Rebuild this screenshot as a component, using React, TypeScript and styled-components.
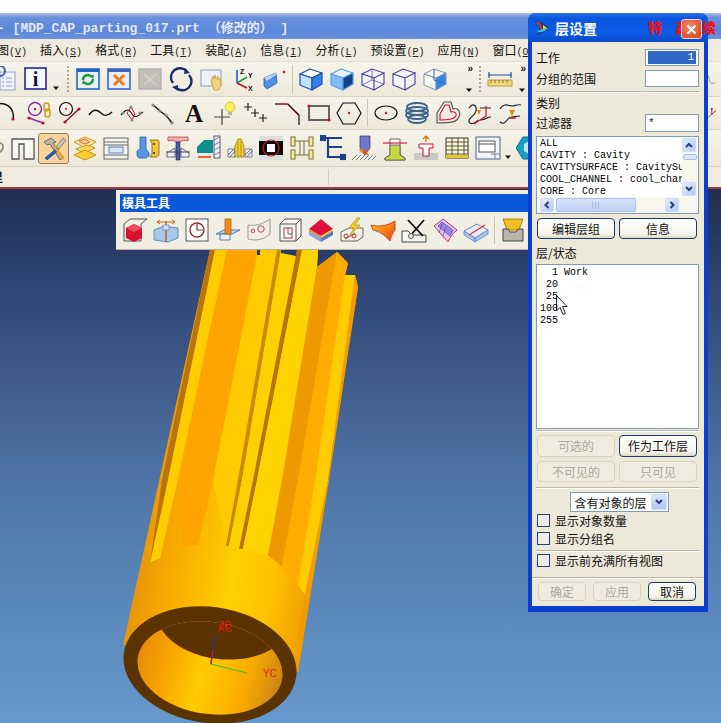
import React from "react";
import styled, { createGlobalStyle } from "styled-components";

const cjk = `"Noto Sans CJK SC", "Liberation Sans", sans-serif`;
const mono = `"Liberation Mono", "Noto Sans CJK SC", monospace`;

const Global = createGlobalStyle`
  html, body { margin: 0; padding: 0; background: #fff; }
  #root { width: 721px; height: 723px; }
`;

const Screen = styled.div`
  position: relative; width: 721px; height: 723px; overflow: hidden; display: flex; flex-direction: column;
  background: #fff; font-family: ${cjk}; font-size: 12px; color: #111;
`;
const TopGap = styled.div`height: 13px; flex: none;`;
const TitleBar = styled.div`
  height: 26px; flex: none; display: flex; align-items: center; white-space: pre; overflow: hidden;
  background: linear-gradient(#a9bde6 0, #6a90dc 18%, #5c86da 70%, #6c92dc 100%);
  color: #e3e9f8; font: bold 13px ${mono}; box-sizing: border-box;
  span { margin-left: -3px; }
`;
const MenuBar = styled.div`
  height: 23px; flex: none; display: flex; align-items: center; gap: 13px; overflow: hidden; padding-left: 40px;
  background: #efebde; border-bottom: 1px solid #e4e0d0; box-sizing: border-box;
`;
const MenuItem = styled.span`
  flex: none; font-size: 12px; line-height: 16px; white-space: nowrap;
  &:first-child { margin-left: -55px; }
  small { font: 10px ${mono}; color: #222; }
  u { text-underline-offset: 1px; }
`;
const ToolRow = styled.div<{ $h: number; $start: number }>`
  height: ${p => p.$h}px; flex: none; display: flex; align-items: center; overflow: hidden; box-sizing: border-box;
  background: linear-gradient(#f6f4ea, #ece9da);
  border-bottom: 1px solid #d8d4c2;
  & > :first-child { margin-left: ${p => p.$start}px; }
`;
const Slot = styled.div<{ $selected?: boolean }>`
  flex: none; width: 31px; height: 31px; display: flex; align-items: center; justify-content: center; box-sizing: border-box;
  ${p => p.$selected ? `background: #fbd29c; border: 1px solid #8c7a60; border-radius: 3px;` : ""}
`;
const Divider = styled.div`
  flex: none; width: 6px; height: 28px; display: flex; justify-content: center;
  &::before { content: ""; width: 1px; background: #c9c5b2; }
`;
const Grip = styled.div<{ $w: number }>`
  flex: none; width: ${p => p.$w}px; height: 26px; display: flex; justify-content: flex-end; box-sizing: border-box; padding-right: 3px;
  &::before { content: ""; width: 2px; background: repeating-linear-gradient(#a8a596 0 2px, transparent 2px 4px); }
`;
const Chevrons = styled.div<{ $w: number }>`
  flex: none; width: ${p => p.$w}px; height: 30px; display: flex; flex-direction: column; justify-content: space-between; align-items: flex-end;
  font: bold 10px/10px "Liberation Sans", sans-serif; color: #111; padding-right: 1px; box-sizing: border-box;
`;
const Small = styled.div<{ $w: number }>`
  flex: none; width: ${p => p.$w}px; height: 26px; display: flex; align-items: flex-end; justify-content: center;
`;
const Tail = styled.div`
  flex: none; margin-left: auto; width: 16px; height: 30px; display: flex; align-items: center;
`;
const StatusBar = styled.div`
  height: 20px; flex: none; display: flex; overflow: hidden; background: #efecdf; font-size: 12px; font-weight: bold;
  box-sizing: border-box; padding-top: 2px;
`;
const StatusCell = styled.div<{ $w: number }>`
  flex: none; width: ${p => p.$w}px; border-right: 1px solid #cfcbb9; height: 16px; line-height: 16px; text-indent: -9px; overflow: hidden;
`;
const RedLine = styled.div`height: 2px; flex: none; background: #a53a38;`;
const Viewport = styled.div`
  position: relative; flex: 1; background: linear-gradient(#1f2e54 0, #2f4472 17%, #4f75a6 55%, #6699cd 100%);
`;
const PartCanvas = styled.svg`position: absolute; left: 0; top: 0;`;
const MoldPanel = styled.div`
  position: absolute; left: 116px; top: 1px; width: 420px; height: 59px; background: #f1efe3;
  box-shadow: 0 1px 0 #b5b2a4; box-sizing: border-box; padding-top: 4px; overflow: hidden;
`;
const MoldTitle = styled.div`
  margin-left: 4px; height: 18px; background: #0a57dc; color: #fff; font-weight: bold; font-size: 12px; line-height: 18px; padding-left: 2px;
`;
const MoldIcons = styled.div`
  display: flex; align-items: center; height: 35px; padding-left: 3px;
`;

/* dialog */
const Dialog = styled.div`
  position: absolute; left: 528px; top: 13px; width: 180px; height: 599px; box-sizing: border-box;
  border: solid #0b3fd2; border-width: 0 4px 6px 4px; border-radius: 8px 8px 0 0; background: #ece9d8;
  display: flex; flex-direction: column;
`;
const DlgTitle = styled.div`
  position: relative; flex: none; height: 29px; margin: 0 -4px; border-radius: 8px 8px 0 0; display: flex; align-items: center; padding-left: 6px; gap: 5px;
  background: linear-gradient(#2b76ee 0, #0a55dc 18%, #0c5ce8 70%, #0a48c4 100%);
  color: #fff; font-weight: bold; font-size: 14px;
`;
const Watermark = styled.div`
  position: absolute; left: 120px; top: 3px; color: #ee1010; font: 900 14px/22px "Noto Sans CJK SC", sans-serif; white-space: pre; letter-spacing: 13px;
`;
const CloseBtn = styled.div`
  position: absolute; left: 153px; top: 6px; width: 21px; height: 20px; border-radius: 3px; box-sizing: border-box; border: 1px solid #f3d5c8;
  background: radial-gradient(circle at 40% 35%, #f08a6c, #d63c14); display: flex; align-items: center; justify-content: center;
`;
const Section = styled.div<{ $top?: number; $h?: number }>`
  margin: ${p => p.$top ?? 0}px 5px 0 4px; flex: none; ${p => p.$h ? `height: ${p.$h}px;` : ""}
`;
const Field = styled(Section)`
  display: flex; align-items: center; justify-content: space-between; line-height: 14px;
`;
const TextBox = styled.div<{ $active?: boolean }>`
  width: 54px; height: 100%; box-sizing: border-box; border: 1px solid #7f9db9; background: #fff; padding: 1px 2px; display: flex;
  font: 11px/15px ${mono};
  ${p => p.$active ? `span { flex: 1; background: #316ac5; color: #fff; text-align: right; padding-right: 2px; line-height: 12px; }` : ""}
`;
const Rule = styled.div<{ $top: number; $full?: boolean }>`
  flex: none; height: 1px; background: #b8b5a6; box-shadow: 0 1px 0 #fff; margin: ${p => p.$top}px ${p => p.$full ? "0" : "5px"} 0 ${p => p.$full ? "0" : "4px"};
`;
const Label = styled(Section)`line-height: 14px; font-size: 12px;`;
const ListFrame = styled(Section)`
  border: 1px solid #7f9db9; background: #fff; box-sizing: border-box; position: relative; overflow: hidden;
`;
const CatGrid = styled.div`
  display: grid; grid-template-columns: 1fr 16px; grid-template-rows: 60px 16px; height: 100%;
`;
const CatText = styled.pre`
  margin: 0; padding: 1px 0 0 3px; font: 10px/12px ${mono}; color: #000; overflow: hidden;
`;
const VBar = styled.div`
  display: flex; flex-direction: column; justify-content: space-between; padding: 1px 0; background: #f7f6ef; position: relative;
`;
const HBar = styled.div`
  grid-column: 1 / 3; display: flex; align-items: center; background: #f7f6ef; padding: 0 1px 0 3px; gap: 2px;
`;
const BarBtn = styled.div`
  flex: none; width: 14px; height: 14px; border-radius: 2px; background: linear-gradient(135deg, #e4edff, #b4c8f5); border: 1px solid #d0dcf5; box-sizing: border-box;
  display: flex; align-items: center; justify-content: center;
`;
const VThumb = styled.div`
  position: absolute; left: 1px; top: 17px; width: 14px; height: 6px; border: 1px solid #a8bfe8; box-sizing: border-box; border-radius: 2px; background: #dbe6fc;
`;
const HThumb = styled.div`
  flex: none; width: 80px; height: 14px; box-sizing: border-box; border: 1px solid #aac0ee; border-radius: 2px; background: linear-gradient(#d6e2fb, #c2d3f8); margin-right: 27px;
  display: flex; align-items: center; justify-content: center; color: #8ca4d8; font: 8px/1 "Liberation Sans", sans-serif; letter-spacing: 1px;
`;
const LayerText = styled.pre`
  margin: 0; padding: 2px 0 0 3px; font: 10px/12px ${mono}; color: #000;
`;
const Cursor = styled.svg`position: absolute; left: 19px; top: 30px;`;
const BtnRow = styled(Section)`
  display: flex; gap: 4px; padding: 0 2px 0 1px;
`;
const Btn = styled.div<{ $off?: boolean; $w?: number }>`
  flex: none; width: ${p => p.$w ?? 78}px; box-sizing: border-box; height: 100%; border-radius: 4px; display: flex; align-items: center; justify-content: center;
  font-size: 12px; line-height: 14px;
  ${p => p.$off
    ? `border: 1px solid #d5d2c2; color: #aca899; background: #efecdf;`
    : `border: 1px solid #1b3a68; color: #111; background: linear-gradient(#fff, #f4f3ea 80%, #dcd8c8);`}
`;
const SelectBox = styled(Section)`
  align-self: center; width: 99px; margin: 4px 0 0 2px; box-sizing: border-box; border: 1px solid #7f9db9; background: #fff;
  display: flex; align-items: center; justify-content: space-between; padding: 0 1px 0 4px;
`;
const SelectBtn = styled(BarBtn)`width: 16px; height: 16px; background: linear-gradient(#dbe6fd, #aec5f5);`;
const Check = styled(Section)`
  display: flex; align-items: center; gap: 5px; margin-left: 5px; line-height: 13px;
  i { flex: none; width: 13px; height: 13px; box-sizing: border-box; border: 1px solid #22466e; background: #f0eee4; }
`;
const Footer = styled.div`
  flex: none; display: flex; height: 19px; gap: 7px; margin: 4px 0 0 6px;
`;

const I: React.FC<{ children: React.ReactNode; s?: number }> = ({ children, s = 26 }) => (
  <svg width={s} height={s} viewBox="0 0 26 26" fill="none">{children}</svg>
);
const dot = (x: number, y: number, c = "#c8102e", r = 1.6) => <circle cx={x} cy={y} r={r} fill={c} />;
const PURPLE = "#4a3f9a";
const txt = (x: number, y: number, t: string, size = 7) => (
  <text x={x} y={y} fontSize={size} fontWeight="bold" fontFamily="Liberation Sans" fill="#111">{t}</text>
);
const cube = (top: string, left: string, right: string, stroke = "#1d4fa8") => (
  <g stroke={stroke} strokeWidth="1.2" strokeLinejoin="round">
    <path d="M2 8 L12 3 L24 7 L14 12 Z" fill={top} />
    <path d="M2 8 L14 12 V24 L2 19 Z" fill={left} />
    <path d="M14 12 L24 7 V18 L14 24 Z" fill={right} />
  </g>
);

const icons: Record<string, React.ReactNode> = {
  doc: <g><rect x="8" y="6" width="15" height="18" fill="#eef2fa" stroke="#8fa2c2" /><path d="M14 12h6M14 16h6M14 20h6M10 12h2M10 16h2M10 20h2" stroke="#8fa2c2" /><circle cx="8" cy="5" r="5" fill="none" stroke="#3a5fa8" strokeWidth="2" /></g>,
  info: <g><rect x="2" y="2" width="21" height="21" fill="#f6f6ff" stroke="#24288c" strokeWidth="1.6" /><text x="12.5" y="20" textAnchor="middle" fontSize="20" fontWeight="bold" fontFamily="Liberation Serif" fill="#0c1038">i</text></g>,
  refresh: <g><rect x="2" y="3" width="22" height="20" fill="#e9f0fa" stroke="#1f66c4" strokeWidth="1.6" /><rect x="2" y="3" width="22" height="3" fill="#1f66c4" /><path d="M8 14a5 5 0 0 1 9-3M18 13a5 5 0 0 1-9 3" stroke="#1f9a3a" strokeWidth="2.4" /><path d="M15 9l4 0 -1 4zM11 18l-4 0 1-4z" fill="#1f9a3a" /></g>,
  xbox: <g><rect x="2" y="3" width="22" height="20" fill="#e9eefa" stroke="#3a62bf" strokeWidth="1.6" /><rect x="2" y="3" width="22" height="3" fill="#3a62bf" /><path d="M8 9l10 10M18 9L8 19" stroke="#ef7a1a" strokeWidth="3" /></g>,
  greyx: <g><rect x="2" y="3" width="22" height="20" fill="#c2bfb4" stroke="#b0b0b8" strokeWidth="1.4" /><path d="M7 8l12 11M19 8L7 19" stroke="#d0cdc2" strokeWidth="2" /></g>,
  rotate: <g stroke="#1c2c6a" strokeWidth="2.4"><path d="M5 17A9 9 0 0 1 19 5.5" /><path d="M21 9A9 9 0 0 1 8 21.5" /><path d="M17 2l5 5-6 1z" fill="#1c2c6a" strokeWidth="0" /><path d="M10 25l-6-4 6-2z" fill="#1c2c6a" strokeWidth="0" /></g>,
  hand: <g><rect x="2" y="4" width="20" height="16" fill="#eef2fb" stroke="#a9b4c8" strokeWidth="1.4" /><path d="M12 15l2-5 1 3 1-4 1 4 2-3 0 4 2-2 1 6-2 6h-5z" fill="#f7d27c" stroke="#c89a3a" strokeWidth=".8" /></g>,
  xyz: <g><path d="M7 17V4" stroke="#1a55c8" strokeWidth="1.6" /><path d="M7 17l10-6" stroke="#1f9a3a" strokeWidth="1.6" /><path d="M7 17l10 5" stroke="#c8102e" strokeWidth="1.6" />{txt(10, 8, "Z")}{txt(18, 12, "Y")}{txt(18, 25, "X")}</g>,
  box3d: <g><path d="M3 12l12-5 1 10-10 6-3-3z" fill="#4f8fe0" stroke="#2a60b8" strokeWidth=".8" /><path d="M3 12l3 3 10-7-1-1z" fill="#bcd6f5" />{dot(23, 6, "#c8102e", 1.3)}</g>,
  cubeA: cube("#ffffff", "#bfe0ff", "#2f80ec"),
  cubeB: cube("#eaf4ff", "#7fbdf6", "#10408c", "#5a9be6"),
  cubeC: <g stroke={PURPLE} strokeWidth="1.1"><path d="M2 8L12 3l12 4-10 5zM2 8l12 4v12L2 19zM14 12l10-5v11l-10 6z" fill="#f3f3fb" /><path d="M12 3v11l-10 5M12 14l12 4" strokeWidth=".7" /></g>,
  cubeD: <g stroke={PURPLE} strokeWidth="1.1"><path d="M2 8L12 3l12 4-10 5zM2 8l12 4v12L2 19zM14 12l10-5v11l-10 6z" fill="#f3f3fb" /></g>,
  cubeE: <g stroke="#8a93a8" strokeWidth="1"><path d="M2 8L12 3l12 4-10 5zM2 8l12 4v12L2 19z" fill="#f4f5f9" /><path d="M14 12l10-5v11l-10 6z" fill="#2f86ea" /><path d="M12 3v11l12 4" stroke="#3a6ab8" /></g>,
  ruler: <g><path d="M1 9h24M2 6v6M24 6v6" stroke="#2a50b0" strokeWidth="1.2" /><rect x="1" y="14" width="24" height="6" fill="#f1d87a" stroke="#b89a3a" /><path d="M4 14v3M8 14v3M12 14v3M16 14v3M20 14v3" stroke="#8a7020" /></g>,
  arc: <g><path d="M-6 13A10 10 0 0 1 18 19" stroke="#111" strokeWidth="1.5" />{dot(3, 19)}{dot(18, 19)}</g>,
  circleChain: <g><circle cx="9" cy="9" r="6.5" stroke="#8e2f9a" strokeWidth="1.4" />{dot(9, 9, "#8e2f9a", 1.2)}<path d="M3 18l14 5" stroke="#8e2f9a" strokeWidth="1.4" />{dot(3, 18)}{dot(17, 23)}<rect x="18" y="3" width="5" height="8" rx="2.5" stroke="#c9a520" strokeWidth="1.6" /><rect x="19" y="9" width="5" height="8" rx="2.5" stroke="#c9a520" strokeWidth="1.6" /></g>,
  circleLine: <g><circle cx="9" cy="9" r="6.5" stroke="#111" strokeWidth="1.2" />{dot(9, 9, "#c8102e", 1)}<path d="M8 22L22 9" stroke="#8a1020" strokeWidth="1.4" />{dot(8, 22)}{dot(22, 9)}</g>,
  tilde: <path d="M1 15C6 8 10 10 13 13S19 17 24 12" stroke="#111" strokeWidth="1.5" />,
  polyCurve: <g><path d="M2 15C8 8 10 9 13 14S19 16 24 12" stroke="#111" strokeWidth="1.2" /><path d="M8 13L12 7 16 14 13 20z" stroke="#c8102e" />{dot(4, 13, "#888")}{dot(12, 7, "#888")}{dot(21, 13, "#888")}{dot(13, 20, "#888")}</g>,
  curvePtsDots: <g><path d="M3 5C8 9 11 12 14 14S19 19 22 23" stroke="#111" strokeWidth="1.4" />{dot(3, 5, "#888")}{dot(10, 11, "#888")}{dot(16, 15, "#888")}{dot(22, 23, "#888")}</g>,
  letterA: <text x="13" y="22" textAnchor="middle" fontSize="25" fontWeight="bold" fontFamily="Liberation Serif" fill="#111">A</text>,
  plusBulb: <g><path d="M2 17h16M10 9v16" stroke="#444" strokeWidth="1.2" /><circle cx="18" cy="7" r="5" fill="#f8ef60" stroke="#d8c840" /><rect x="16" y="12" width="4" height="3" fill="#b8b8a0" /></g>,
  pluses: <path d="M5 3v8M1 7h8M12 9v8M8 13h8M20 14v8M16 18h8" stroke="#222" strokeWidth="1.2" />,
  corner: <g><path d="M1 4H14L25 15V25" stroke="#111" strokeWidth="1.2" /><path d="M1 4H13L25 16" stroke="#c8102e" /></g>,
  rectS: <g><rect x="4" y="6" width="20" height="14" stroke="#555" strokeWidth="1.8" />{dot(4, 6)}{dot(24, 20)}</g>,
  hexa: <g><path d="M7 3H19L25 13 19 24H7L1 13z" stroke="#111" strokeWidth="1.2" />{dot(13, 13, "#c8102e", 1.2)}</g>,
  ellipseS: <g><ellipse cx="13" cy="13" rx="11" ry="7" stroke="#111" strokeWidth="1.2" />{dot(13, 13, "#c8102e", 1.2)}</g>,
  spring: <g stroke="#3c648c" strokeWidth="1.8"><ellipse cx="13" cy="7" rx="10" ry="4" /><ellipse cx="13" cy="11" rx="11" ry="4" /><ellipse cx="13" cy="15" rx="11" ry="4" /><ellipse cx="13" cy="19" rx="9" ry="4" /></g>,
  heartS: <g><path d="M2 13L9 2h7l2 7c5-2 8 3 6 8s-8 6-22 6z" stroke="#555" strokeWidth="1.2" /><path d="M5 14l5-9h4l2 7c4-1 6 2 5 4s-6 4-16 4z" stroke="#c8102e" strokeWidth="1.1" /></g>,
  curveA: <g><path d="M3 8c4-6 8-2 7 3s-7 6-7 10 6 3 9-1" stroke="#222" strokeWidth="1.2" /><path d="M14 8h11M14 20c5 0 7-3 11-3" stroke="#222" strokeWidth="1.2" /><path d="M8 24L20 16V6" stroke="#c8102e" strokeWidth="1.2" /><path d="M11 10l2 5 2-5z" fill="#f0801a" /></g>,
  curveB: <g><path d="M3 9c4-7 9-3 12-3s5-2 9-1M3 22c3 3 6 0 8-3s7-2 12-3" stroke="#222" strokeWidth="1.2" /><path d="M12 10l3 6 3-6z" fill="#f0801a" /><path d="M13 18h6" stroke="#c8102e" strokeWidth="1.4" /></g>,
  leading: <path d="M16 9c4-3 8-1 8 3s-4 6-8 7" stroke="#8a8478" strokeWidth="1.6" />,
  notch: <path d="M2 4H24V24H14V9H9V24H2z" fill="#f6f6f2" stroke="#555" strokeWidth="1.3" />,
  hammer: <g><path d="M3 7l7-4 5 4-3 1 10 15-3 2L9 9l-3 1z" fill="#b9b4a6" stroke="#555" strokeWidth=".8" /><path d="M22 3l3 2-7 9-3-2z" fill="#c9c5b6" stroke="#555" strokeWidth=".6" /><path d="M16 13L4 23l2 2 12-10z" fill="#1c5fc0" stroke="#163c80" strokeWidth=".6" /><path d="M13 11l10 13" stroke="#e8a52a" strokeWidth="2.6" /></g>,
  layers: <g stroke="#c8961c" strokeWidth="1"><path d="M2 7l11-5 11 5-11 6z" fill="#ffe9a0" /><path d="M7 6l6-2 5 3-6 2z" fill="#f8c9a0" stroke="#d07030" /><path d="M4 14l11-4 8 3-11 5z" fill="#ffd860" /><path d="M2 20l11-5 11 5-11 5z" fill="#ffcc30" /></g>,
  frame: <g stroke="#666"><rect x="1" y="3" width="24" height="21" fill="#f4f4f0" /><path d="M1 7h24M1 20h24M1 10h24" /><rect x="6" y="12" width="14" height="6" fill="#dbe6f5" stroke="#6080b8" /></g>,
  blueYellow: <g><path d="M6 2h6v12l3 4v3l-3 2H5l-2-2v-5l3-2z" fill="#5a96e0" stroke="#2a60b0" strokeWidth=".8" /><path d="M16 5h7c2 0 2 1 2 3v10c0 3-1 4-3 4h-6l2-3V8z" fill="#f3c63a" stroke="#8a6a10" strokeWidth=".9" />{dot(20, 9, "#333", 1)}{dot(20, 18, "#333", 1)}</g>,
  tsec: <g><path d="M3 2H23V6C20 5 17 5 15 7H11C9 5 6 5 3 6z" fill="#f4b0b0" stroke="#c04040" strokeWidth=".8" /><path d="M2 18L10 13V22H2zM24 18L16 13V22H24z" fill="#eef" stroke="#446" strokeWidth=".8" /><rect x="11" y="7" width="4" height="18" fill="#4a5aa8" stroke="#223" strokeWidth=".6" /><path d="M1 17H25" stroke="#444" /></g>,
  tealWall: <g><path d="M1 12l7-7h9v13H1z" fill="#0e8d8a" /><rect x="18" y="1" width="6" height="22" fill="#f0f0f4" stroke="#336" strokeWidth=".8" /><path d="M18 5l6-3M18 10l6-3M18 15l6-3M18 20l6-3" stroke="#557" strokeWidth=".7" /><path d="M2 22h13" stroke="#e04010" strokeWidth="1.6" /></g>,
  hatchY: <g><path d="M1 14h7v8H1zM18 14h7v8h-7z" fill="#eef" stroke="#556" strokeWidth=".7" /><path d="M1 20l6-6M3 22l5-6M18 20l6-6M20 22l5-6" stroke="#556" strokeWidth=".8" /><path d="M8 22V11l3-7h3l3 7v11z" fill="#f2d030" stroke="#8a7010" strokeWidth=".7" /><path d="M11 22V6M14 22V6" stroke="#8a7010" strokeWidth=".6" /></g>,
  blackRed: <g><rect x="1" y="1" width="24" height="24" fill="#0b0b0b" /><rect x="1" y="1" width="24" height="5" fill="#ddd" /><rect x="1" y="20" width="24" height="5" fill="#ddd" /><rect x="9" y="9" width="8" height="8" fill="#fff" /><circle cx="13" cy="13" r="8" stroke="#d01818" strokeWidth="1.2" /></g>,
  yellowH: <g stroke="#7a7040" strokeWidth="1"><rect x="2" y="2" width="4" height="9" fill="#f4ee90" /><rect x="20" y="2" width="4" height="9" fill="#f4ee90" /><rect x="2" y="15" width="4" height="9" fill="#f4ee90" /><rect x="20" y="15" width="4" height="9" fill="#f4ee90" /><path d="M6 6h14M6 20h14M11 6v14M15 6v14" /></g>,
  blueS: <g stroke="#1f3f8c" strokeWidth="2.2"><path d="M3 3H22M8 3V12H22M8 12V22H24" /><rect x="1" y="1" width="4" height="4" fill="#1f3f8c" /><rect x="21" y="20" width="4" height="4" fill="#1f3f8c" /></g>,
  drill: <g><path d="M9 1h10v12l-5 7-5-7z" fill="#6e78c8" stroke="#334" strokeWidth=".7" /><path d="M9 14l3 3" stroke="#f08020" strokeWidth="3" /><path d="M12 15l5 5M18 14l-5 5" stroke="#f05a10" strokeWidth="1.6" /><path d="M1 25l5-5M5 25l5-5M9 25l5-5M13 25l5-5M17 25l5-5M21 25l4-4" stroke="#7a8090" strokeWidth="1" /></g>,
  greenT: <g><path d="M8 4h10v16l5 3v2H3v-2l5-3z" fill="#fff" stroke="#444" strokeWidth=".8" /><path d="M8 10h10v10l5 3v2H3v-2l5-3z" fill="#c8d840" stroke="#556" strokeWidth=".8" /><path d="M1 8h24" stroke="#c8102e" strokeWidth="1.1" /></g>,
  redT: <g><path d="M1 18h8l2-5h4l2 5h8v7H1z" fill="#c9c9c9" /><path d="M6 9h14v4h-4v8h-6v-8H6z" fill="#fff" stroke="#c8102e" strokeWidth="1" /><path d="M13 1v6M10 4l3-3 3 3" stroke="#e06010" strokeWidth="1.2" /></g>,
  gridT: <g><rect x="2" y="3" width="22" height="20" fill="#fbf6d0" stroke="#333" /><path d="M2 7h22M2 11h22M2 15h22M2 19h22M8 3v20M14 3v20M20 3v20" stroke="#333" strokeWidth=".8" /><rect x="2" y="20" width="22" height="3" fill="#e8c820" /></g>,
  win: <g><rect x="1" y="2" width="24" height="22" fill="#f0f3fa" stroke="#6c7a96" strokeWidth="1.2" /><rect x="4" y="6" width="16" height="11" fill="#fff" stroke="#555" /><path d="M4 9h16" stroke="#555" /><path d="M16 19h9M20 19v5" stroke="#6c7a96" /></g>,
  teal: <g><path d="M7 2h12l7 11-7 11H7L0 13z" fill="#1a9ec0" stroke="#0b7088" /><path d="M8 9l5-3 5 3v7l-5 3-5-3z" fill="#bfe6ee" /></g>,
  moldRed: <g><path d="M2 7l6-5h17l-6 5v17H2z" stroke="#444" strokeWidth=".9" /><path d="M4 11l8-4 8 4v10l-8 4-8-4z" fill="#d81030" /><path d="M4 11l8-4 8 4-8 4z" fill="#f04860" /></g>,
  moldSplit: <g><path d="M1 13l10-4 14 2v10l-10 4-14-2z" fill="#a8c8ea" stroke="#5078a8" strokeWidth=".8" /><path d="M13 4v21" stroke="#d04020" strokeWidth="1.2" /><path d="M4 5h18M4 5l3-2M4 5l3 2M22 5l-3-2M22 5l-3 2" stroke="#d86018" strokeWidth="1" /><path d="M10 8h6v5h-6z" fill="#cfe0f4" stroke="#5078a8" strokeWidth=".6" /></g>,
  moldCircle: <g><rect x="2" y="2" width="22" height="22" fill="#fff" stroke="#555" /><circle cx="13" cy="13" r="7" stroke="#8a3030" strokeWidth="1.4" /><path d="M13 7v6h6" stroke="#8a3030" strokeWidth="1.2" /></g>,
  moldCross: <g><path d="M1 17l8-4h16l-8 4z" fill="#bcd4f0" stroke="#3a60a0" strokeWidth=".8" /><path d="M5 17h10v6H5z" fill="#eef" stroke="#3a60a0" strokeWidth=".8" /><rect x="10" y="2" width="6" height="15" fill="#f08a18" stroke="#a05a08" strokeWidth=".7" /></g>,
  moldSheet: <g><path d="M2 8C8 9 16 8 24 2V17C17 23 10 24 2 22z" fill="#efefe8" stroke="#9a9a90" /><circle cx="7" cy="14" r="1.8" stroke="#d04848" /><circle cx="15" cy="12" r="3.2" stroke="#d04848" /></g>,
  moldBox: <g stroke="#555"><path d="M3 7l5-5h16v17l-5 5H3z" fill="#f6f6f4" /><path d="M3 7h16v17M19 7l5-5" /><rect x="7" y="11" width="8" height="10" fill="#fff" stroke="#b03030" /><path d="M11 11v6h4" stroke="#555" /></g>,
  moldColor: <g><path d="M1 12l12-10 12 10-12 7z" fill="#e0103c" /><path d="M1 12l12 7v2L1 14z" fill="#f08a20" /><path d="M25 12l-12 7v2l12-7z" fill="#f2c820" /><path d="M1 14l12 7v4L1 18z" fill="#8aa4e0" /><path d="M25 14l-12 7v4l12-7z" fill="#5a78c8" /></g>,
  moldBolt: <g><path d="M2 15l8-4h14v9l-6 4H2z" fill="#f4f2e4" stroke="#666" /><path d="M18 1L10 11h5l-4 7 10-10h-5l5-7z" fill="#f2d020" stroke="#a08010" strokeWidth=".6" /><circle cx="7" cy="19" r="2" stroke="#c03030" /><circle cx="15" cy="19" r="2" stroke="#c03030" /><path d="M6 22l10-6" stroke="#a03030" /></g>,
  moldOrange: <g><path d="M1 8C9 10 17 9 25 4V13C22 17 21 20 20 24 14 17 8 14 3 13z" fill="url(#mo)" stroke="#c03010" strokeWidth=".8" /><defs><linearGradient id="mo" x1="0" y1="0" x2="1" y2="1"><stop stopColor="#ffc820" /><stop offset="1" stopColor="#f04010" /></linearGradient></defs></g>,
  moldX: <g><path d="M1 14h6l4 4h14v7H1z" fill="#f4f4f0" stroke="#444" /><path d="M7 3l15 16M23 3L9 19" stroke="#111" strokeWidth="1.8" /><circle cx="10" cy="19" r="2.4" fill="#eee" stroke="#555" /></g>,
  moldPurple: <g><path d="M2 9C6 6 9 4 11 2L25 13C21 16 18 20 16 25z" fill="#e4c8f0" stroke="#c03070" strokeWidth="1" /><path d="M6 9l12 10 3-6-11-8z" fill="#9a88e0" stroke="#5040a8" strokeWidth=".7" /><path d="M10 7l-3 9M14 10l-3 9" stroke="#5040a8" strokeWidth=".7" /></g>,
  moldPlane: <g><path d="M1 14L14 7l11 6-13 8z" fill="#e6eefb" stroke="#6c8ac0" /><path d="M1 14v4l11 7v-4zM25 13v4l-13 8v-4z" fill="#a8c4ea" stroke="#6c8ac0" strokeWidth=".8" /><path d="M6 18L22 8" stroke="#e03030" strokeWidth="1.2" /></g>,
  moldYellow: <g><path d="M3 2H23L19 13H7z" fill="#f4c020" stroke="#907010" strokeWidth=".8" /><path d="M3 12h5l2 3h6l2-3h5v12H3z" fill="#b8b6a8" stroke="#444" /></g>,
  edgeCurve: <path d="M-2 6c6-4 8 3 9 8s3 8 9 5" stroke="#777" strokeWidth="1.3" />,
  edgeRed: <g><path d="M3 22l8-7" stroke="#778" strokeWidth="1.6" /><path d="M11 15v-9M11 15l7-6" stroke="#c8102e" strokeWidth="1.6" />{dot(3, 12, "#f0a010")}{dot(11, 6)}</g>,
};

const Ico: React.FC<{ n: string; selected?: boolean }> = ({ n, selected }) => (
  <Slot $selected={selected}><I>{icons[n]}</I></Slot>
);
const Dropdown = () => (
  <svg width="8" height="8" viewBox="0 0 8 8"><path d="M1 2.5h6L4 6z" fill="#111" /></svg>
);
const Chev: React.FC<{ d: string }> = ({ d }) => {
  const paths: Record<string, string> = { up: "M2 7l3-3 3 3", down: "M2 3l3 3 3-3", left: "M6.5 2L3.5 5l3 3", right: "M3.5 2l3 3-3 3" };
  return <svg width="10" height="10" viewBox="0 0 10 10" fill="none"><path d={paths[d]} stroke="#2a3f78" strokeWidth="2" /></svg>;
};

const row1a = ["refresh", "xbox", "greyx", "rotate", "hand", "xyz", "box3d"];
const row1b = ["cubeA", "cubeB", "cubeC", "cubeD", "cubeE"];
const row2a = ["arc", "circleChain", "circleLine", "tilde", "polyCurve", "curvePtsDots", "letterA", "plusBulb", "pluses", "corner", "rectS", "hexa"];
const row2b = ["ellipseS", "spring", "heartS", "curveA", "curveB"];
const row3 = ["notch", "hammer", "layers", "frame", "blueYellow", "tsec", "tealWall", "hatchY", "blackRed", "yellowH", "blueS", "drill", "greenT", "redT", "gridT", "win"];
const mold = ["moldRed", "moldSplit", "moldCircle", "moldCross", "moldSheet", "moldBox", "moldColor", "moldBolt", "moldOrange", "moldX", "moldPurple", "moldPlane"];
const menus: [string, string][] = [["视图", "V"], ["插入", "S"], ["格式", "R"], ["工具", "T"], ["装配", "A"], ["信息", "I"], ["分析", "L"], ["预设置", "P"], ["应用", "N"], ["窗口", "O"]];

const poly = (pts: string, fill: string) => <polygon points={pts} fill={fill} />;

const Part = () => (
  <PartCanvas width="721" height="534" viewBox="0 189 721 534" fill="none">
    <defs>
      <linearGradient id="bodyG" gradientUnits="userSpaceOnUse" x1="125" y1="640" x2="300" y2="668">
        <stop offset="0" stopColor="#e8950a" />
        <stop offset=".18" stopColor="#f8a800" />
        <stop offset=".55" stopColor="#ffd000" />
        <stop offset=".78" stopColor="#ffc000" />
        <stop offset="1" stopColor="#f09c00" />
      </linearGradient>
      <linearGradient id="wallG" gradientUnits="userSpaceOnUse" x1="138" y1="660" x2="283" y2="680">
        <stop offset="0" stopColor="#e88c08" />
        <stop offset=".2" stopColor="#f8a400" />
        <stop offset=".45" stopColor="#ffcc00" />
        <stop offset=".75" stopColor="#fcac00" />
        <stop offset="1" stopColor="#c88414" />
      </linearGradient>
      <clipPath id="innerC"><ellipse cx="210" cy="668" rx="73" ry="46" transform="rotate(8 210 668)" /></clipPath>
    </defs>
    <polygon fill="url(#bodyG)" points="210,250 277,250 318,250 317,267 337,252 348,263 345,275 355,275 358,287 298,672 123,645" />
    {poly("210,250 215,250 168,480 155,561 150,563 162,480", "#b87408")}
    {poly("215,250 227,250 178,480 160,558 150,563 168,480", "#ffcc00")}
    {poly("227,250 258,250 213,480 198,545 183,547 178,480", "#ffa400")}
    {poly("258,250 277,250 238,480 226,546 213,480", "#ffca00")}
    {poly("277,250 281,250 242,480 229,546 226,546 238,480", "#c98806")}
    {poly("281,250 297,250 253,480 239,549 229,546 242,480", "#ffd000")}
    {poly("297,250 302,250 257,480 243,549 239,549 253,480", "#b87408")}
    {poly("302,250 318,250 317,267 282,480 268,555 243,549 257,480", "#ffd400")}
    {poly("317,267 337,252 298,480 282,567 268,555 282,480", "#f09800")}
    {poly("337,252 348,263 345,275 315,480 298,585 282,567 298,480", "#ffae00")}
    {poly("345,275 355,275 328,480 305,595 298,585 315,480", "#ffcc00")}
    {poly("355,275 358,287 329,480 300,660 298,630 305,595 328,480", "#f39c00")}
    {poly("257,249 260,249 260,255 257,255", "#263a63")}
    {poly("281,249 297,249 296,256 281,253", "#263a63")}
    <ellipse cx="210" cy="665" rx="87" ry="58" fill="#5a3300" transform="rotate(8 210 665)" />
    <ellipse cx="210" cy="668" rx="73" ry="46" fill="url(#wallG)" transform="rotate(8 210 668)" />
    <path d="M158 624Q172 650 210 658Q250 664 275 647L310 600L130 590Z" fill="#5a3300" clipPath="url(#innerC)" />
    <path d="M211 664l4-28" stroke="#2a30b0" strokeWidth="1.1" />
    <path d="M211 664l2-14" stroke="#d01860" strokeWidth="1.1" />
    <path d="M211 664l36 9" stroke="#44c020" strokeWidth="1.1" />
    <path d="M211 664v-4" stroke="#e02020" strokeWidth="1.1" />
    <text x="218" y="629" fontFamily="Liberation Sans" fontSize="10" fill="#e01818">ZC</text>
    <text x="218" y="632" fontFamily="Liberation Sans" fontSize="10" fill="#e01818">XC</text>
    <text x="263" y="677" fontFamily="Liberation Sans" fontSize="10" fill="#e01818">YC</text>
  </PartCanvas>
);

export default function App() {
  return (
    <Screen>
      <Global />
      <TopGap />
      <TitleBar><span>{"- [MDP_CAP_parting_017.prt （修改的） ]"}</span></TitleBar>
      <MenuBar>
        {menus.map(([a, b]) => <MenuItem key={a}>{a}<small>(<u>{b}</u>)</small></MenuItem>)}
      </MenuBar>
      <ToolRow $h={35} $start={-11}>
        <Ico n="doc" /><Ico n="info" />
        <Small $w={9}><Dropdown /></Small>
        <Grip $w={12} />
        {row1a.map(n => <Ico key={n} n={n} />)}
        <Divider />
        {row1b.map(n => <Ico key={n} n={n} />)}
        <Chevrons $w={24}><span>»</span><Dropdown /></Chevrons>
        <Grip $w={10} />
        <Ico n="ruler" />
        <Chevrons $w={12}><span>»</span><Dropdown /></Chevrons>
        <Tail><I>{icons.edgeCurve}</I></Tail>
      </ToolRow>
      <ToolRow $h={33} $start={-8}>
        {row2a.map(n => <Ico key={n} n={n} />)}
        <Divider />
        {row2b.map(n => <Ico key={n} n={n} />)}
        <Tail><I>{icons.edgeRed}</I></Tail>
      </ToolRow>
      <ToolRow $h={37} $start={-24}>
        <Ico n="leading" />
        {row3.map(n => <Ico key={n} n={n} selected={n === "hammer"} />)}
        <Small $w={10}><Dropdown /></Small>
        <Slot><I>{icons.teal}</I></Slot>
      </ToolRow>
      <StatusBar>
        <StatusCell $w={328}>里</StatusCell>
      </StatusBar>
      <RedLine />
      <Viewport>
        <Part />
        <MoldPanel>
          <MoldTitle>模具工具</MoldTitle>
          <MoldIcons>
            {mold.map(n => <Ico key={n} n={n} />)}
            <Divider />
            <Ico n="moldYellow" />
          </MoldIcons>
        </MoldPanel>
      </Viewport>

      <Dialog>
        <DlgTitle>
          <svg width="16" height="16" viewBox="0 0 16 16"><path d="M1 1c5 0 10 3 14 7-4 4-9 7-13 7 4-3 5-9-1-14z" fill="#1c3f78" /><path d="M3 12c5 1 8-1 11-4-4 0-8 1-11 4z" fill="#38c0d8" /><path d="M3 2c3 2 4 4 4 7" stroke="#e03030" strokeWidth="2" fill="none" /><path d="M9 5l4 3-4 1z" fill="#f4d040" /></svg>
          层设置
          <Watermark>特鑫续</Watermark>
          <CloseBtn>
            <svg width="11" height="11" viewBox="0 0 11 11"><path d="M1.5 1.5l8 8M9.5 1.5l-8 8" stroke="#fff" strokeWidth="2.2" /></svg>
          </CloseBtn>
        </DlgTitle>
        <Field $top={7} $h={17}>工作<TextBox $active><span>1</span></TextBox></Field>
        <Field $top={4} $h={17}>分组的范围<TextBox /></Field>
        <Rule $top={4} />
        <Label $top={4} $h={14}>类别</Label>
        <Field $top={4} $h={18}>过滤器<TextBox>*</TextBox></Field>
        <ListFrame $top={4} $h={78}>
          <CatGrid>
            <CatText>{"ALL\nCAVITY : Cavity\nCAVITYSURFACE : CavitySu\nCOOL_CHANNEL : cool_char\nCORE : Core"}</CatText>
            <VBar>
              <BarBtn><Chev d="up" /></BarBtn>
              <VThumb />
              <BarBtn><Chev d="down" /></BarBtn>
            </VBar>
            <HBar>
              <BarBtn><Chev d="left" /></BarBtn>
              <HThumb>|||</HThumb>
              <BarBtn><Chev d="right" /></BarBtn>
            </HBar>
          </CatGrid>
        </ListFrame>
        <BtnRow $top={4} $h={21}><Btn>编辑层组</Btn><Btn>信息</Btn></BtnRow>
        <Label $top={7} $h={14}>层/状态</Label>
        <ListFrame $top={4} $h={165}>
          <LayerText>{"  1 Work\n 20\n 25\n100\n255"}</LayerText>
          <Cursor width="12" height="22" viewBox="0 0 12 22">
            <path d="M.5.5V16l3.5-3.5 3 7 2.5-1-3-7H11z" fill="none" stroke="#222" strokeWidth="1" />
          </Cursor>
        </ListFrame>
        <Rule $top={1} />
        <BtnRow $top={4} $h={22}><Btn $off>可选的</Btn><Btn>作为工作层</Btn></BtnRow>
        <BtnRow $top={4} $h={21}><Btn $off>不可见的</Btn><Btn $off>只可见</Btn></BtnRow>
        <Rule $top={5} />
        <SelectBox $h={20}>含有对象的层<SelectBtn><Chev d="down" /></SelectBtn></SelectBox>
        <Check $top={2} $h={13}><i />显示对象数量</Check>
        <Check $top={5} $h={13}><i />显示分组名</Check>
        <Rule $top={5} />
        <Check $top={3} $h={13}><i />显示前充满所有视图</Check>
        <Rule $top={10} $full />
        <Footer>
          <Btn $off $w={48}>确定</Btn>
          <Btn $off $w={48}>应用</Btn>
          <Btn $w={48}>取消</Btn>
        </Footer>
      </Dialog>
    </Screen>
  );
}
